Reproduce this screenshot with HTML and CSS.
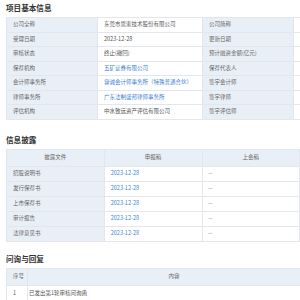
FILE: index.html
```html
<!DOCTYPE html>
<html lang="zh">
<head>
<meta charset="utf-8">
<link rel="stylesheet" href="styles.css">
</head>
<body>
<div class="page">
  <section class="sec sec-basic">
    <h2 class="title">项目基本信息</h2>
    <table class="tbl info">
      <colgroup><col class="c-l1"><col class="c-v1"><col class="c-l2"><col class="c-v2"></colgroup>
      <tr><td class="lab">公司全称</td><td>东莞市恩索技术股份有限公司</td><td class="lab">公司简称</td><td>恩索技术</td></tr>
      <tr><td class="lab">受理日期</td><td>2023-12-28</td><td class="lab">更新日期</td><td>2023-12-28</td></tr>
      <tr><td class="lab">审核状态</td><td>终止(撤回)</td><td class="lab">预计融资金额(亿元)</td><td>4.50</td></tr>
      <tr><td class="lab">保荐机构</td><td class="link">五矿证券有限公司</td><td class="lab">保荐代表人</td><td>黄某某，李某某</td></tr>
      <tr><td class="lab">会计师事务所</td><td class="link">容诚会计师事务所（特殊普通合伙）</td><td class="lab">签字会计师</td><td>熊某某，王某某</td></tr>
      <tr><td class="lab">律师事务所</td><td class="link">广东法制盛邦律师事务所</td><td class="lab">签字律师</td><td>张某某，陈某某</td></tr>
      <tr><td class="lab">评估机构</td><td>中水致远资产评估有限公司</td><td class="lab">签字评估师</td><td>刘某某，周某某</td></tr>
    </table>
  </section>

  <section class="sec sec-disc">
    <h2 class="title">信息披露</h2>
    <table class="tbl disc">
      <tr class="head"><th>披露文件</th><th>申报稿</th><th>上会稿</th><th>注册稿</th></tr>
      <tr><td class="lab">招股说明书</td><td class="link ctr">2023-12-28</td><td class="ctr">--</td><td class="ctr">--</td></tr>
      <tr><td class="lab">发行保荐书</td><td class="link ctr">2023-12-28</td><td class="ctr">--</td><td class="ctr">--</td></tr>
      <tr><td class="lab">上市保荐书</td><td class="link ctr">2023-12-28</td><td class="ctr">--</td><td class="ctr">--</td></tr>
      <tr><td class="lab">审计报告</td><td class="link ctr">2023-12-28</td><td class="ctr">--</td><td class="ctr">--</td></tr>
      <tr><td class="lab">法律意见书</td><td class="link ctr">2023-12-28</td><td class="ctr">--</td><td class="ctr">--</td></tr>
    </table>
  </section>

  <section class="sec sec-qa">
    <h2 class="title">问询与回复</h2>
    <table class="tbl qa">
      <colgroup><col class="c-no"><col class="c-ct"><col class="c-dt"></colgroup>
      <tr class="head"><th class="left">序号</th><th>内容</th><th>日期</th></tr>
      <tr><td>1</td><td class="content">已发出第1轮审核问询函</td><td class="ctr">2024-01-22</td></tr>
    </table>
  </section>
</div>
</body>
</html>
```

FILE: styles.css
```css
html { overflow: hidden; background: #fff; }
body {
  margin: 0;
  font-family: "Noto Sans CJK SC", "Noto Sans", sans-serif;
  color: #555;
}
.page {
  width: 392px;
  padding: 0 6px;
}
.sec { display: block; }
.sec-basic { padding-top: 3px; }
.sec-disc { margin-top: 15px; }
.sec-qa { margin-top: 12px; }
.title {
  margin: 0 0 4px;
  font-size: 7.6px;
  line-height: 10px;
  font-weight: bold;
  color: #333;
}
.tbl {
  width: 392px;
  border-collapse: collapse;
  table-layout: fixed;
  font-size: 5.5px;
}
.tbl td, .tbl th {
  border: 1px solid #e3e7ec;
  padding: 0 6px;
  line-height: 7px;
  white-space: nowrap;
  overflow: hidden;
  text-align: left;
  font-weight: normal;
}
.info td { height: 13.5px; }
.c-l1 { width: 91px; }
.c-v1 { width: 105px; }
.c-l2 { width: 91px; }
.c-v2 { width: 105px; }
.lab {
  background: #e9eff7;
  color: #666;
}
.link { color: #3d7fd4; }
.ctr { text-align: center; }
.disc th, .qa th {
  background: #e9eff7;
  color: #666;
  height: 16px;
  text-align: center;
}
.disc td { height: 14px; }
.qa th.left { text-align: left; }
.qa td { height: 15px; }
.c-no { width: 21px; }
.c-ct { width: 293px; }
.c-dt { width: 78px; }
.qa .content { padding-left: 1px; }
```
